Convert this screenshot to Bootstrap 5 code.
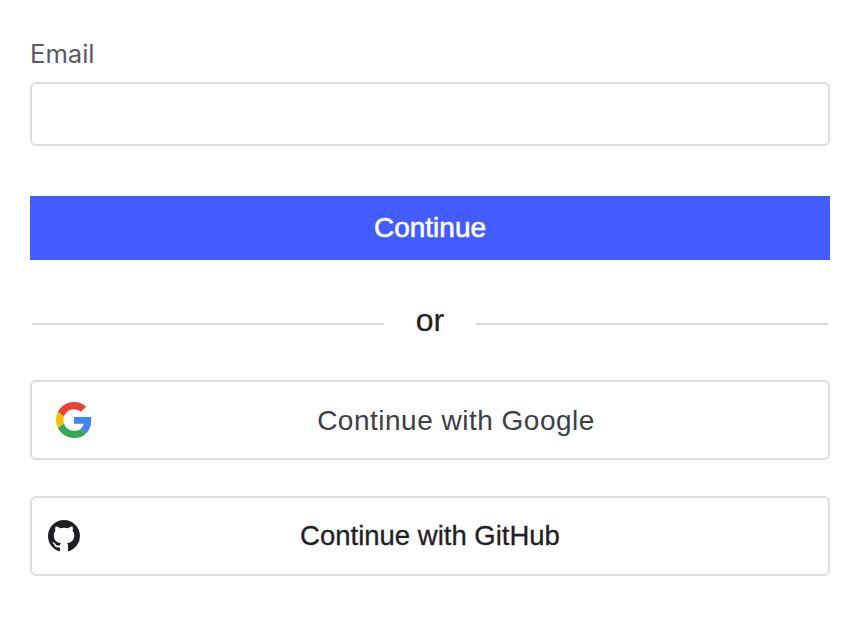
<!DOCTYPE html>
<html lang="en">
<head>
    <meta charset="UTF-8">
    <meta name="viewport" content="width=device-width, initial-scale=1.0">
    <title>Sign in</title>
    <link rel="stylesheet" href="https://cdn.jsdelivr.net/npm/bootstrap@5.3.0/dist/css/bootstrap.min.css">
    <style>
        body {
            background: #ffffff;
            font-family: "Liberation Sans", Arial, sans-serif;
        }

        .login-wrap {
            padding: 36px 30px 0;
        }

        .email-label {
            display: block;
            font-family: "Inter", sans-serif;
            font-size: 25.6px;
            line-height: 36px;
            color: #5a5a62;
            margin-bottom: 10px;
        }

        .email-input {
            height: 64px;
            border: 2px solid #dcdde5;
            border-radius: 6px;
            margin-bottom: 50px;
        }

        .continue-btn {
            height: 64px;
            background: #435cff;
            border: 0;
            border-radius: 0;
            color: #ffffff;
            font-size: 28px;
            -webkit-text-stroke: 0.6px #ffffff;
        }

        .or-row {
            height: 64px;
            margin: 28px 0;
            padding: 0 2px;
        }

        .or-line {
            flex: 1;
            height: 2px;
            margin-top: 8px;
            background: #d8d9dc;
        }

        .or-text {
            width: 92px;
            text-align: center;
            font-size: 32px;
            color: #1f2023;
            -webkit-text-stroke: 0.2px #1f2023;
        }

        .social-btn {
            height: 80px;
            border: 2px solid #dcdde3;
            border-radius: 6px;
            background: #ffffff;
            position: relative;
            padding: 0;
        }

        .google-btn {
            color: #3c4043;
            font-size: 28px;
            letter-spacing: 0.5px;
            padding: 2px 0 0 52px;
            margin-bottom: 36px;
        }

        .github-btn {
            color: #1f2023;
            font-size: 27.5px;
            -webkit-text-stroke: 0.3px #1f2023;
        }

        .social-btn svg {
            position: absolute;
            top: 50%;
            transform: translateY(-50%);
        }

        .google-btn svg { left: 24px; }
        .github-btn svg { left: 16px; }
    </style>
</head>
<body>
    <div class="login-wrap">
        <label class="email-label" for="email">Email</label>
        <input type="email" id="email" class="form-control email-input">

        <button class="btn continue-btn w-100">Continue</button>

        <div class="or-row d-flex align-items-center">
            <div class="or-line"></div>
            <div class="or-text">or</div>
            <div class="or-line"></div>
        </div>

        <button class="btn social-btn google-btn w-100 d-block">
            <svg width="36" height="36" viewBox="0 0 48 48">
                <path fill="#EA4335" d="M24 9.5c3.54 0 6.71 1.22 9.21 3.6l6.85-6.85C35.9 2.38 30.47 0 24 0 14.62 0 6.51 5.38 2.56 13.22l7.98 6.19C12.43 13.72 17.74 9.5 24 9.5z"/>
                <path fill="#4285F4" d="M46.98 24.55c0-1.57-.15-3.09-.38-4.55H24v9.02h12.94c-.58 2.96-2.26 5.48-4.78 7.18l7.73 6c4.51-4.18 7.09-10.36 7.09-17.65z"/>
                <path fill="#FBBC05" d="M10.53 28.59c-.48-1.45-.76-2.99-.76-4.59s.27-3.14.76-4.59l-7.98-6.19C.92 16.46 0 20.12 0 24c0 3.88.92 7.54 2.56 10.78l7.97-6.19z"/>
                <path fill="#34A853" d="M24 48c6.48 0 11.93-2.13 15.89-5.81l-7.73-6c-2.15 1.45-4.92 2.3-8.16 2.3-6.26 0-11.57-4.22-13.47-9.91l-7.98 6.19C6.51 42.62 14.62 48 24 48z"/>
            </svg>
            Continue with Google
        </button>

        <button class="btn social-btn github-btn w-100 d-block">
            <svg width="32" height="32" viewBox="0 0 16 16" fill="#1f2023">
                <path d="M8 0C3.58 0 0 3.58 0 8c0 3.54 2.29 6.53 5.47 7.59.4.07.55-.17.55-.38 0-.19-.01-.82-.01-1.49-2.01.37-2.53-.49-2.69-.94-.09-.23-.48-.94-.82-1.13-.28-.15-.68-.52-.01-.53.63-.01 1.08.58 1.23.82.72 1.21 1.87.87 2.33.66.07-.52.28-.87.51-1.07-1.78-.2-3.64-.89-3.64-3.95 0-.87.31-1.59.82-2.15-.08-.2-.36-1.02.08-2.12 0 0 .67-.21 2.2.82.64-.18 1.32-.27 2-.27.68 0 1.36.09 2 .27 1.53-1.04 2.2-.82 2.2-.82.44 1.1.16 1.92.08 2.12.51.56.82 1.27.82 2.15 0 3.07-1.87 3.75-3.65 3.95.29.25.54.73.54 1.48 0 1.07-.01 1.93-.01 2.2 0 .21.15.46.55.38A8.013 8.013 0 0016 8c0-4.42-3.58-8-8-8z"/>
            </svg>
            Continue with GitHub
        </button>
    </div>
    <script src="https://cdn.jsdelivr.net/npm/bootstrap@5.3.0/dist/js/bootstrap.bundle.min.js"></script>
</body>
</html>
